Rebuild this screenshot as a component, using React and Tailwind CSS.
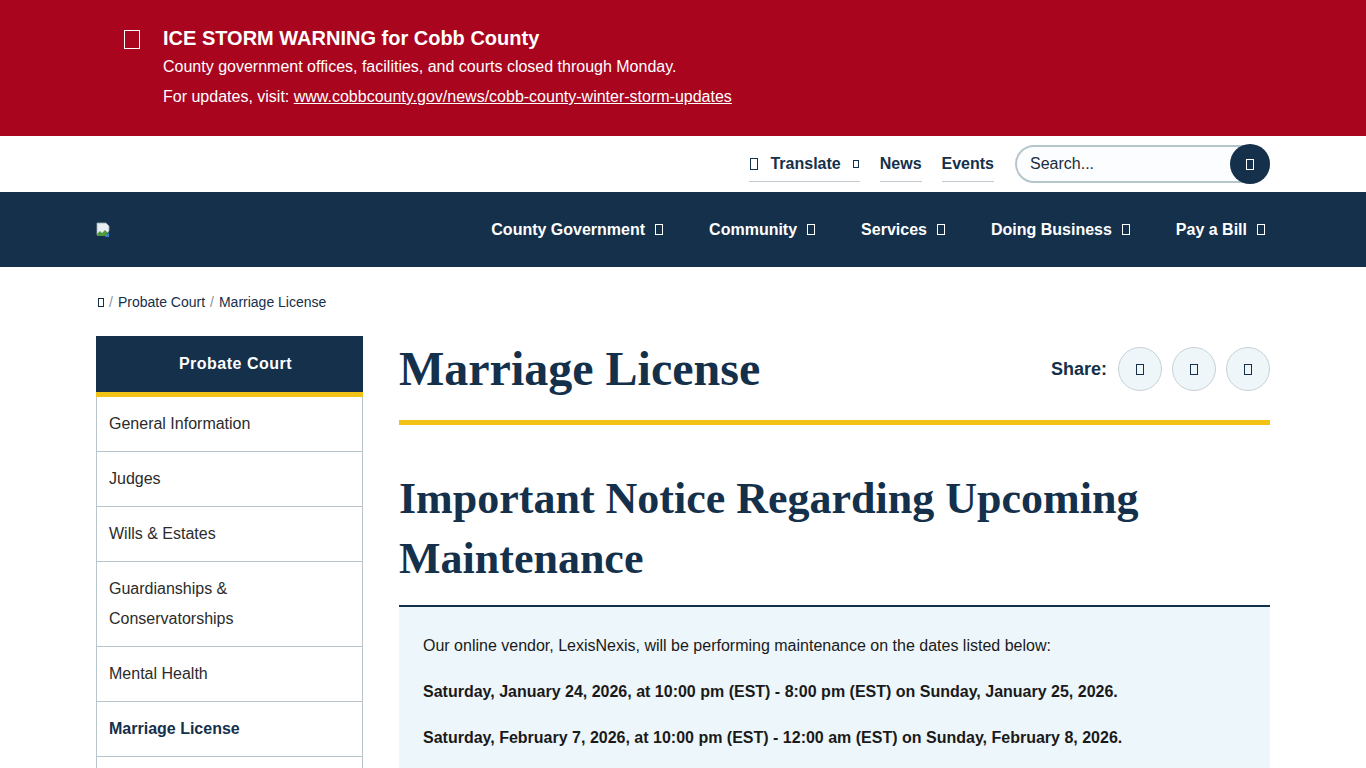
import React from "react";

const navItems = [
  "County Government",
  "Community",
  "Services",
  "Doing Business",
  "Pay a Bill",
];

const sideLinks = [
  { label: "General Information" },
  { label: "Judges" },
  { label: "Wills & Estates" },
  { label: "Guardianships & Conservatorships", wrap: true },
  { label: "Mental Health" },
  { label: "Marriage License", active: true },
  { label: "" },
];

// missing icon-font glyph, drawn as the empty box the browser shows
function Tofu({ className = "w-[8px] h-[11px]" }) {
  return (
    <span
      className={`inline-block border border-current shrink-0 ${className}`}
    />
  );
}

function BrokenImage() {
  return (
    <svg width="16" height="16" viewBox="0 0 16 16">
      <path d="M1 1h9l3 3v5l-2 2-2-2-3 3-2-2-3 3z" fill="#e8eef2" stroke="#9aa7b0" strokeWidth="0.8" />
      <path d="M1 12l3-3 2 2 3-3 2 2v4H1z" fill="#4f9a3a" />
      <path d="M11 12l2-2v5H9z" fill="#3c7ec9" />
    </svg>
  );
}

export default function App() {
  return (
    <div
      className="min-h-screen bg-white text-[#222]"
      style={{ fontFamily: "'Liberation Sans', Arial, sans-serif" }}
    >
      {/* Alert banner */}
      <div className="bg-[#a9051f] text-white">
        <div className="max-w-[1174px] mx-auto pl-[28px] pt-[24px] pb-[24px] flex">
          <div className="w-[39px] pt-[6px]">
            <Tofu className="w-[16px] h-[19px]" />
          </div>
          <div>
            <div className="text-[20px] leading-[28px] font-bold">
              ICE STORM WARNING for Cobb County
            </div>
            <p className="text-[16px] leading-[30px]">
              County government offices, facilities, and courts closed through Monday.
            </p>
            <p className="text-[16px] leading-[30px]">
              For updates, visit:{" "}
              <a href="#" className="underline">
                www.cobbcounty.gov/news/cobb-county-winter-storm-updates
              </a>
            </p>
          </div>
        </div>
      </div>

      {/* Utility bar */}
      <div className="max-w-[1174px] mx-auto h-[56px] flex items-center justify-end gap-[21px]">
        <div className="flex items-center gap-[20px] text-[16px] font-bold text-[#14304b]">
          <a href="#" className="flex items-center gap-[12px] border-b border-[#c3cbd1] pb-[5px] pt-[6px] px-[1px]">
            <Tofu className="w-[8px] h-[12px]" />
            <span>Translate</span>
            <Tofu className="w-[6px] h-[8px]" />
          </a>
          <a href="#" className="border-b border-[#c3cbd1] pb-[5px] pt-[6px]">News</a>
          <a href="#" className="border-b border-[#c3cbd1] pb-[5px] pt-[6px]">Events</a>
        </div>
        <div className="relative w-[255px] h-[40px] flex items-center">
          <div className="w-full h-[38px] rounded-full border-2 border-[#b6c5cc] bg-[#fbfdfe] pl-[13px] flex items-center text-[16px] text-[#1c2c3c]">
            Search...
          </div>
          <button className="absolute right-0 top-0 w-[40px] h-[40px] rounded-full bg-[#14304b] text-white flex items-center justify-center">
            <Tofu className="w-[8px] h-[11px]" />
          </button>
        </div>
      </div>

      {/* Main nav */}
      <div className="bg-[#14304b] h-[75px]">
        <div className="max-w-[1174px] mx-auto h-full flex items-center justify-between">
          <BrokenImage />
          <nav className="flex items-center gap-[46px] pr-[5px] text-white text-[16px] font-bold">
            {navItems.map((item) => (
              <a key={item} href="#" className="flex items-center gap-[10px]">
                <span>{item}</span>
                <Tofu className="w-[8px] h-[11px]" />
              </a>
            ))}
          </nav>
        </div>
      </div>

      {/* Breadcrumb */}
      <div className="max-w-[1174px] mx-auto pt-[26px] pb-[25px] text-[14px] leading-[18px] flex items-center gap-[5px] text-[#8a949c]">
        <span className="pl-[2px] text-[#14304b]"><Tofu className="w-[6px] h-[9px]" /></span>
        <span>/</span>
        <a href="#" className="text-[#14304b]">Probate Court</a>
        <span>/</span>
        <span className="text-[#14304b]">Marriage License</span>
      </div>

      <div className="max-w-[1174px] mx-auto flex gap-[36px]">
        {/* Sidebar */}
        <aside className="w-[267px] shrink-0">
          <div className="bg-[#14304b] h-[56px] flex items-center justify-center pl-[12px] text-white font-bold text-[16px] tracking-[0.5px]">
            Probate Court
          </div>
          <div className="h-[5px] bg-[#f2c316]" />
          <ul className="border-x border-[#b8c4cb]">
            {sideLinks.map((l, i) => (
              <li
                key={i}
                className={`border-b border-[#b8c4cb] px-[12px] py-[12px] text-[16px] leading-[30px] ${
                  l.active ? "font-bold text-[#14304b]" : "text-[#2b2b2b]"
                }`}
              >
                {l.wrap ? (
                  <>
                    Guardianships &amp;
                    <br />
                    Conservatorships
                  </>
                ) : (
                  l.label || "\u00a0"
                )}
              </li>
            ))}
          </ul>
        </aside>

        {/* Content */}
        <main className="flex-1 min-w-0">
          <div className="h-[66px] flex items-center justify-between">
            <h1
              className="text-[48px] leading-none font-bold text-[#14304b]"
              style={{ fontFamily: "'Liberation Serif', 'Times New Roman', serif" }}
            >
              Marriage License
            </h1>
            <div className="flex items-center gap-[10px]">
              <span className="text-[18px] font-bold text-[#14304b] mr-[1px]">Share:</span>
              {[0, 1, 2].map((i) => (
                <a
                  key={i}
                  href="#"
                  className="w-[44px] h-[44px] rounded-full border border-[#c6d1d7] bg-[#eef6fa] flex items-center justify-center text-[#14304b]"
                >
                  <Tofu className="w-[8px] h-[11px]" />
                </a>
              ))}
            </div>
          </div>
          <div className="mt-[18px] h-[5px] bg-[#f2c316]" />

          <h2
            className="mt-[44px] text-[44px] leading-[60px] font-bold text-[#14304b]"
            style={{ fontFamily: "'Liberation Serif', 'Times New Roman', serif" }}
          >
            Important Notice Regarding Upcoming Maintenance
          </h2>

          <div className="mt-[16px] border-t-2 border-[#14304b] bg-[#edf6fa] px-[24px] pt-[28px] pb-[20px] text-[16px] leading-[22px] text-[#1a1a1a]">
            <p className="mb-[24px]">
              Our online vendor, LexisNexis, will be performing maintenance on the dates listed below:
            </p>
            <p className="mb-[24px] font-bold">
              Saturday, January 24, 2026, at 10:00 pm (EST) - 8:00 pm (EST) on Sunday, January 25, 2026.
            </p>
            <p className="mb-[24px] font-bold">
              Saturday, February 7, 2026, at 10:00 pm (EST) - 12:00 am (EST) on Sunday, February 8, 2026.
            </p>
          </div>
        </main>
      </div>
    </div>
  );
}
